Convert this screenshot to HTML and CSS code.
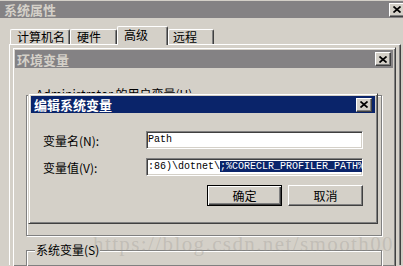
FILE: index.html
```html
<!DOCTYPE html>
<html lang="zh-CN">
<head>
    <meta charset="UTF-8">
    <meta name="viewport" content="width=device-width, initial-scale=1.0">
    <title>编辑系统变量</title>
    <link rel="stylesheet" href="styles.css">
</head>
<body>
    <div class="sys">
        <div class="title inactive">
            <span class="caption">系统属性</span>
            <span class="xbtn"><svg width="8" height="7" viewBox="0 0 8 7"><path d="M0.5 0.5l7 6M7.5 0.5l-7 6" stroke="#000" stroke-width="1.7"/></svg></span>
        </div>
        <div class="tabs">
            <div class="tab t1">计算机名</div>
            <div class="tab t2">硬件</div>
            <div class="tab t3 on">高级</div>
            <div class="tab t4">远程</div>
        </div>
        <div class="panel"></div>
    </div>

    <div class="win env">
        <div class="title inactive">
            <span class="caption">环境变量</span>
            <span class="xbtn"><svg width="8" height="7" viewBox="0 0 8 7"><path d="M0.5 0.5l7 6M7.5 0.5l-7 6" stroke="#000" stroke-width="1.7"/></svg></span>
        </div>
        <div class="env-body">
            <div class="group user">
                <span class="group-label">Administrator 的用户变量(U)</span>
            </div>
            <div class="group sysvars">
                <span class="group-label">系统变量(S)</span>
                <div class="list"></div>
            </div>
        </div>
    </div>

    <div class="win dlg">
        <div class="title active">
            <span class="caption">编辑系统变量</span>
            <span class="xbtn"><svg width="8" height="7" viewBox="0 0 8 7"><path d="M0.5 0.5l7 6M7.5 0.5l-7 6" stroke="#000" stroke-width="1.7"/></svg></span>
        </div>
        <div class="dlg-body">
            <div class="row">
                <span class="label">变量名(N):</span>
                <div class="field">Path</div>
            </div>
            <div class="row">
                <span class="label">变量值(V):</span>
                <div class="field">:86)\dotnet\<span class="sel">;%CORECLR_PROFILER_PATH%</span></div>
            </div>
            <div class="actions">
                <button class="btn default">确定</button>
                <button class="btn">取消</button>
            </div>
        </div>
    </div>

    <div class="watermark">https://blog.csdn.net/smooth00</div>
</body>
</html>
```

FILE: styles.css
```css
body {
    margin: 0;
    width: 403px;
    height: 266px;
    overflow: hidden;
    position: relative;
    background: #d4d0c8;
    font-family: "Noto Sans CJK SC", sans-serif;
    font-size: 12px;
    color: #000;
}
.sys {
    padding-top: 1px;
}
.title {
    display: flex;
    align-items: center;
    height: 17px;
    font-size: 13px;
    font-weight: bold;
    line-height: 17px;
}
.inactive {
    background: #848284;
    color: #d4d0c8;
}
.active {
    background: #0a246a;
    color: #fff;
}
.sys .title {
    padding-left: 4px;
}
.sys .xbtn {
    margin-right: -2px;
}
.xbtn {
    margin-left: auto;
    width: 16px;
    height: 14px;
    box-sizing: border-box;
    background: #d4d0c8;
    border: 1px solid;
    border-color: #fff #404040 #404040 #fff;
    box-shadow: inset -1px -1px 0 #808080;
    display: flex;
    align-items: center;
    justify-content: center;
}
.tabs {
    display: flex;
    align-items: flex-end;
    height: 18px;
    margin-top: 8px;
    padding-left: 10px;
}
.tab {
    box-sizing: border-box;
    height: 15px;
    padding-left: 6px;
    line-height: 14px;
    font-size: 12px;
    border-top: 1px solid #fff;
    border-left: 1px solid #fff;
    border-right: 1px solid #404040;
    border-radius: 2px 2px 0 0;
    box-shadow: inset -1px 0 0 #808080;
}
.t1 { width: 60px; }
.t2 { width: 47px; }
.t3 { width: 51px; }
.t4 { width: 46px; padding-left: 4px; }
.tab.on {
    height: 19px;
    margin-bottom: -1px;
    position: relative;
    z-index: 1;
    background: #d4d0c8;
    line-height: 16px;
}
.panel {
    height: 220px;
    margin-left: 9px;
    margin-right: 2px;
    border-top: 1px solid #fff;
    border-left: 1px solid #fff;
    border-right: 1px solid #404040;
    box-shadow: inset -1px 0 0 #808080;
}
.win {
    position: absolute;
    box-sizing: border-box;
    padding: 2px;
    background: #d4d0c8;
    border: 1px solid;
    border-color: #d4d0c8 #404040 #404040 #d4d0c8;
    box-shadow: inset 1px 1px 0 #fff, inset -1px -1px 0 #808080;
}
.env {
    left: 12px;
    top: 47px;
    width: 384px;
    height: 219px;
    border-bottom: 0;
}
.env .title {
    height: 18px;
    padding-left: 2px;
}
.env .xbtn {
    margin-right: 2px;
}
.env-body {
    padding: 27px 11px 0;
}
.group {
    border: 1px solid #808080;
    box-shadow: inset 1px 1px 0 #fff, 1px 1px 0 #fff;
}
.group-label {
    display: inline-block;
    margin: -8px 0 0 8px;
    padding: 0 1px;
    line-height: 12px;
    background: #d4d0c8;
    vertical-align: top;
}
.user {
    height: 139px;
}
.sysvars {
    margin-top: 14px;
    border-bottom: 0;
}
.sysvars .group-label {
    margin-top: -7px;
}
.list {
    height: 0;
    margin: 8px 10px 0;
    background: #fff;
    border: 1px solid;
    border-color: #808080 #fff #fff #808080;
    box-shadow: inset 1px 1px 0 #404040;
}
.dlg {
    left: 28px;
    top: 93px;
    width: 350px;
    height: 131px;
    z-index: 2;
}
.dlg .title {
    padding-left: 3px;
}
.dlg .xbtn {
    margin-right: 3px;
}
.dlg-body {
    padding: 18px 12px 0;
}
.row {
    display: flex;
    align-items: center;
    margin-bottom: 9px;
}
.label {
    width: 103px;
    padding-top: 2px;
    font-size: 12px;
    line-height: 14px;
}
.field {
    box-sizing: border-box;
    width: 217px;
    height: 18px;
    padding-left: 1px;
    overflow: hidden;
    white-space: nowrap;
    background: #fff;
    border: 1px solid;
    border-color: #808080 #fff #fff #808080;
    box-shadow: inset 1px 1px 0 #404040, inset -1px -1px 0 #d4d0c8;
    font-family: "Liberation Mono", monospace;
    font-size: 10px;
    line-height: 16px;
}
.sel {
    background: #0a246a;
    color: #fff;
}
.actions {
    display: flex;
    justify-content: flex-end;
    gap: 6px;
    margin-top: 4px;
}
.btn {
    width: 75px;
    height: 21px;
    padding: 0;
    background: #d4d0c8;
    border: 1px solid;
    border-color: #fff #404040 #404040 #fff;
    box-shadow: inset -1px -1px 0 #808080;
    font-family: "Noto Sans CJK SC", sans-serif;
    font-size: 12px;
    line-height: 16px;
    color: #000;
}
.btn.default {
    border: 1px solid #000;
    box-shadow: inset 1px 1px 0 #fff, inset -1px -1px 0 #404040, inset -2px -2px 0 #808080;
}
.watermark {
    position: absolute;
    left: 93px;
    top: 234px;
    z-index: 3;
    font-family: "Liberation Serif", serif;
    font-size: 21px;
    line-height: 21px;
    letter-spacing: 1.4px;
    color: rgba(150, 146, 140, 0.3);
    white-space: nowrap;
}
```
